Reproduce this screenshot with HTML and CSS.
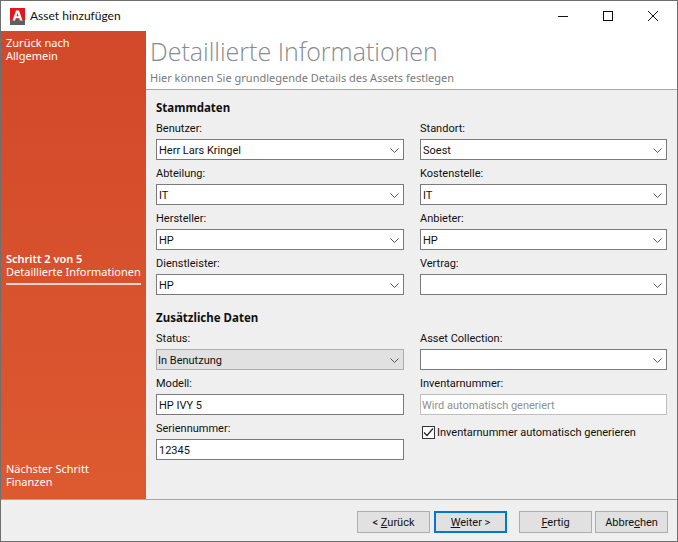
FILE: index.html
```html
<!DOCTYPE html>
<html lang="de">
<head>
<meta charset="utf-8">
<title>Asset hinzufügen</title>
<link rel="stylesheet" href="styles.css">
</head>
<body>
<div class="window">
  <header class="titlebar">
    <svg class="logo" width="16" height="18" viewBox="0 0 16 18">
      <rect x="0" y="0" width="15" height="16" fill="#e3151d"/>
      <rect x="0" y="12" width="15" height="5" fill="#5f5f5f"/>
      <path d="M2.5 12.5 6 2.5h3l3.5 10h-2.6l-.7-2.2H5.8l-.7 2.2zM6.5 8.2h2L7.5 5z" fill="#fff" fill-rule="evenodd"/>
    </svg>
    <span class="title">Asset hinzufügen</span>
    <div class="controls">
      <svg width="12" height="12" viewBox="0 0 12 12"><path d="M1 6.5h10" stroke="#111" fill="none"/></svg>
      <svg width="12" height="12" viewBox="0 0 12 12"><rect x="1.5" y="1.5" width="9" height="9" stroke="#111" fill="none"/></svg>
      <svg width="12" height="12" viewBox="0 0 12 12"><path d="M1 1l10 10M11 1L1 11" stroke="#111" fill="none"/></svg>
    </div>
  </header>
  <div class="middle">
    <aside class="sidebar">
      <div class="nav">Zurück nach<br>Allgemein</div>
      <div class="step">
        <div class="step-count">Schritt 2 von 5</div>
        <div class="step-name">Detaillierte Informationen</div>
      </div>
      <div class="nav">Nächster Schritt<br>Finanzen</div>
    </aside>
    <main class="main">
      <div class="head">
        <h1>Detaillierte Informationen</h1>
        <p>Hier können Sie grundlegende Details des Assets festlegen</p>
      </div>
      <div class="form">
        <h2>Stammdaten</h2>
        <div class="grid">
          <div class="field"><label>Benutzer:</label><div class="box">Herr Lars Kringel<svg class="chev" width="9" height="5" viewBox="0 0 9 5"><path d="M.5.5l4 4 4-4" fill="none" stroke="#555"/></svg></div></div>
          <div class="field"><label>Standort:</label><div class="box">Soest<svg class="chev" width="9" height="5" viewBox="0 0 9 5"><path d="M.5.5l4 4 4-4" fill="none" stroke="#555"/></svg></div></div>
          <div class="field"><label>Abteilung:</label><div class="box">IT<svg class="chev" width="9" height="5" viewBox="0 0 9 5"><path d="M.5.5l4 4 4-4" fill="none" stroke="#555"/></svg></div></div>
          <div class="field"><label>Kostenstelle:</label><div class="box">IT<svg class="chev" width="9" height="5" viewBox="0 0 9 5"><path d="M.5.5l4 4 4-4" fill="none" stroke="#555"/></svg></div></div>
          <div class="field"><label>Hersteller:</label><div class="box">HP<svg class="chev" width="9" height="5" viewBox="0 0 9 5"><path d="M.5.5l4 4 4-4" fill="none" stroke="#555"/></svg></div></div>
          <div class="field"><label>Anbieter:</label><div class="box">HP<svg class="chev" width="9" height="5" viewBox="0 0 9 5"><path d="M.5.5l4 4 4-4" fill="none" stroke="#555"/></svg></div></div>
          <div class="field"><label>Dienstleister:</label><div class="box">HP<svg class="chev" width="9" height="5" viewBox="0 0 9 5"><path d="M.5.5l4 4 4-4" fill="none" stroke="#555"/></svg></div></div>
          <div class="field"><label>Vertrag:</label><div class="box"><svg class="chev" width="9" height="5" viewBox="0 0 9 5"><path d="M.5.5l4 4 4-4" fill="none" stroke="#555"/></svg></div></div>
        </div>
        <h2 class="second">Zusätzliche Daten</h2>
        <div class="grid">
          <div class="field"><label>Status:</label><div class="box readonly">In Benutzung<svg class="chev" width="9" height="5" viewBox="0 0 9 5"><path d="M.5.5l4 4 4-4" fill="none" stroke="#555"/></svg></div></div>
          <div class="field"><label>Asset Collection:</label><div class="box"><svg class="chev" width="9" height="5" viewBox="0 0 9 5"><path d="M.5.5l4 4 4-4" fill="none" stroke="#555"/></svg></div></div>
          <div class="field"><label>Modell:</label><div class="box">HP IVY 5</div></div>
          <div class="field"><label>Inventarnummer:</label><div class="box disabled">Wird automatisch generiert</div></div>
          <div class="field"><label>Seriennummer:</label><div class="box">12345</div></div>
          <div class="check">
            <span class="checkbox"><svg width="11" height="11" viewBox="0 0 11 11"><path d="M1 5.5l3 3 6-7" fill="none" stroke="#222" stroke-width="1.2"/></svg></span>
            <span>Inventarnummer automatisch generieren</span>
          </div>
        </div>
      </div>
    </main>
  </div>
  <footer class="footer">
    <button class="btn">&lt; <u>Z</u>urück</button>
    <button class="btn primary"><u>W</u>eiter &gt;</button>
    <button class="btn finish"><u>F</u>ertig</button>
    <button class="btn">Abbre<u>c</u>hen</button>
  </footer>
</div>
</body>
</html>
```
FILE: styles.css
```css
* { box-sizing: border-box; }
html, body { margin: 0; height: 100%; }
body { font-family: "Roboto", "Open Sans", sans-serif; font-size: 11px; color: #111; }
.window { width: 678px; height: 542px; border: 1px solid #6f6f6f; display: flex; flex-direction: column; background: #efefef; }
.titlebar { height: 30px; flex: none; background: #fff; display: flex; align-items: center; padding-left: 9px; }
.logo { margin-right: 4px; margin-top: 1px; }
.title { font-family: "Lato", sans-serif; font-size: 12px; color: #111; padding-bottom: 2px; }
.controls { margin-left: auto; display: flex; gap: 33px; padding-right: 18px; }
.middle { flex: 1; display: flex; min-height: 0; }
.sidebar { width: 145px; flex: none; background: linear-gradient(#d2482a, #dd5a30); color: #fff; padding: 5px 5px 11px 5px; display: flex; flex-direction: column; justify-content: space-between; font-family: "Noto Sans", sans-serif; font-size: 11px; line-height: 13px; }
.step { border-bottom: 2px solid #f1d5cb; padding-bottom: 5px; margin-top: 12px; }
.step-count { font-weight: 600; }
.main { flex: 1; display: flex; flex-direction: column; min-width: 0; }
.head { height: 59px; background: #fff; border-bottom: 1px solid #a5a5a5; padding-left: 4px; flex: none; }
.head h1 { margin: 0; padding-top: 2px; font-family: "Open Sans", sans-serif; font-weight: 300; font-size: 25px; line-height: 36px; color: #868b91; }
.head p { margin: 0; font-family: "Noto Sans", sans-serif; font-size: 11px; line-height: 14px; color: #7a7a7a; padding-top: 2px; }
.form { flex: 1; padding: 10px 10px 0 10px; }
.form h2 { margin: 0; font-family: "Noto Sans", sans-serif; font-size: 11.5px; font-weight: 700; line-height: 16px; color: #111; }
.form h2.second { margin-top: 15px; }
.grid { display: grid; grid-template-columns: 248px 247px; column-gap: 16px; row-gap: 1px; }
.field label { display: block; height: 23px; line-height: 25px; }
.box { height: 21px; border: 1px solid #7a7a7a; background: #fff; padding: 1px 4px 0 2px; line-height: 19px; display: flex; align-items: center; }
.box.readonly { background: #e1e1e1; border-color: #adadad; padding-left: 1px; }
.box.disabled { border-color: #bfbfbf; color: #8f8f8f; padding-left: 1px; }
.chev { flex: none; margin-left: auto; }
.check { display: flex; align-items: center; gap: 2px; padding: 9px 0 0 2px; align-self: start; line-height: 15px; }
.checkbox { width: 13px; height: 13px; border: 1px solid #333; background: #fff; display: flex; align-items: center; justify-content: center; flex: none; }
.footer { height: 42px; flex: none; border-top: 1px solid #a5a5a5; display: flex; justify-content: flex-end; align-items: flex-start; gap: 4px; padding: 11px 9px 0 0; }
.btn { width: 73px; height: 22px; background: #e1e1e1; border: 1px solid #adadad; font: inherit; color: #111; padding: 0; }
.btn.primary { border: 2px solid #0078d7; }
.btn.finish { margin-left: 8px; margin-right: -1px; }
```
